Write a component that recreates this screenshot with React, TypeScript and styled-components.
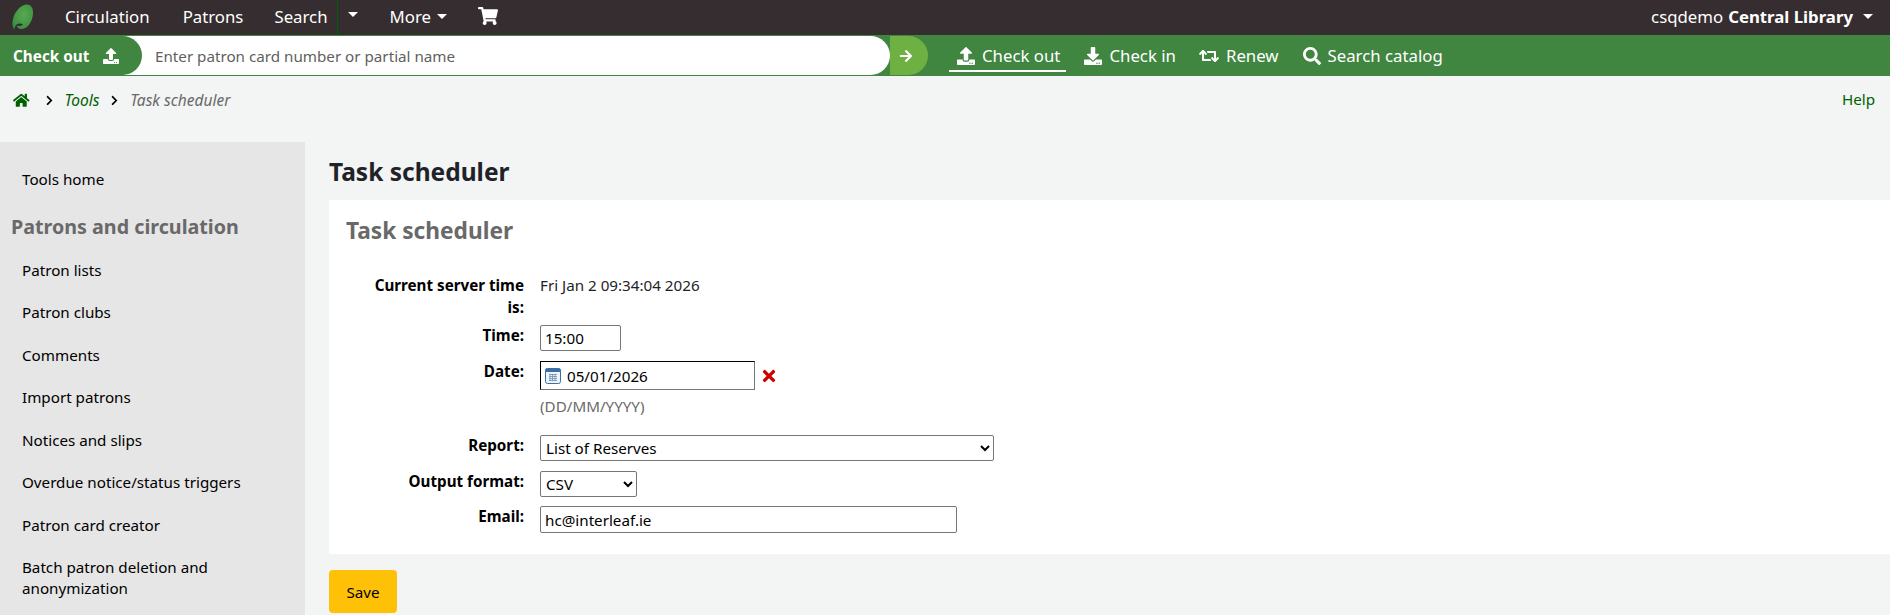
import React from "react";
import styled, { createGlobalStyle } from "styled-components";
import { FaUpload, FaDownload, FaRetweet, FaSearch, FaHome, FaShoppingCart, FaTimes, FaArrowRight, FaChevronRight } from "react-icons/fa";

const Global = createGlobalStyle`
  html, body { margin: 0; padding: 0; height: 615px; overflow: hidden; background: #f3f4f4; }
  body { font-family: "Noto Sans", "Open Sans", sans-serif; font-size: 15.2px; color: #1f2328; }
  * { box-sizing: border-box; }
`;
const Page = styled.div`
  width: 1890px; height: 615px; display: flex; flex-direction: column; overflow: hidden;
`;
const TopBar = styled.nav`
  height: 35px; flex: none; background: #352d2f; color: #fff; display: flex; align-items: center; font-size: 16.8px; padding: 0 0 3px 12px;
`;
const Logo = styled.svg`
  width: 22px; height: 26px; flex: none; margin-right: 31px; margin-top: 1px;
`;
const NavItem = styled.span<{ $gap: number }>`
  margin-right: ${p => p.$gap}px; display: flex; align-items: center; white-space: nowrap;
`;
const Caret = styled.i<{ $left?: number }>`
  display: inline-block; width: 0; height: 0; margin-left: ${p => p.$left ?? 0}px;
  border-left: 5px solid transparent; border-right: 5px solid transparent; border-top: 5px solid #fff;
`;
const SplitCaret = styled.span`
  width: 53px; height: 35px; margin-bottom: -3px; border-left: 1px solid #006100; padding: 0 0 6px 10px; display: flex; align-items: center; flex: none;
`;
const TopRight = styled.div`
  margin-left: auto; margin-right: 17px; display: flex; align-items: center; white-space: nowrap;
  b { font-weight: 700; margin-left: 5px; }
`;
const SearchBar = styled.div`
  height: 41px; flex: none; background: #408540; display: flex; align-items: center; color: #fff; padding: 1px 0;
`;
const SearchField = styled.div`
  width: 890px; height: 39px; flex: none; background: #fff; border-radius: 0 20px 20px 0; display: flex; align-items: center;
`;
const Pill = styled.div`
  width: 142px; height: 39px; flex: none; background: #408540; border-radius: 0 20px 20px 0; padding-left: 13px; display: flex; align-items: center;
  font-weight: 700; font-size: 15.3px; color: #fff; gap: 14px; white-space: nowrap;
`;
const Placeholder = styled.span`
  margin-left: 13px; color: #5f5f5f; font-size: 15.2px;
`;
const Go = styled.div`
  width: 38px; height: 39px; flex: none; background: #6fb043; border-radius: 0 20px 20px 0; display: flex; align-items: center; justify-content: center; font-size: 14px; padding-right: 6px;
`;
const QuickLink = styled.a<{ $on?: boolean; $ml: number; $w?: number }>`
  display: flex; align-items: center; gap: 7px; font-size: 16.8px; color: #fff; white-space: nowrap; height: 30px; margin-top: 2px;
  margin-left: ${p => p.$ml}px; padding: 0 ${p => (p.$on ? 6 : 0)}px 0 ${p => (p.$on ? 8 : 0)}px;
  border-bottom: 2px solid ${p => (p.$on ? "#fff" : "transparent")};
  svg { font-size: ${p => p.$w ?? 18}px; }
`;
const Crumbs = styled.div`
  height: 66px; flex: none; display: flex; align-items: flex-start; padding: 14px 15px 0 13px; font-size: 15.5px; line-height: 21px; font-style: italic; color: #696969;
`;
const CrumbHome = styled.span`
  color: #006100; font-size: 16.5px; display: flex; height: 21px; align-items: center; margin-right: 4px;
`;
const Sep = styled.span`
  color: #000; font-size: 11px; display: flex; height: 21px; align-items: center; margin: 0 10px 0 10px;
`;
const CrumbLink = styled.a`
  color: #006100;
`;
const Help = styled.a`
  margin: -1px 0 0 auto; color: #006100; font-style: normal; font-size: 15.2px;
`;
const Body = styled.div`
  flex: 1; display: flex; min-height: 0;
`;
const Side = styled.aside`
  width: 305px; flex: none; background: #e6e6e6; padding-top: 27px;
`;
const SideItem = styled.a`
  display: block; padding: 0 22px; margin-bottom: 21.5px; color: #000; font-size: 15.2px; line-height: 21px;
`;
const SideHead = styled.h5`
  margin: 0 0 20px; padding: 2px 0 0 11px; font-size: 19.7px; line-height: 26px; font-weight: 700; color: #696969;
`;
const Main = styled.main`
  flex: 1; padding: 0 0 0 24px; min-width: 0;
`;
const H1 = styled.h1`
  margin: 0; padding-top: 14px; height: 58px; font-size: 24.5px; line-height: 32px; font-weight: 700; color: #1f2328;
`;
const Panel = styled.section`
  background: #fff; height: 354px; padding: 16px 17px 0;
`;
const H2 = styled.h2`
  margin: 0 0 29px; font-size: 22.7px; line-height: 30px; font-weight: 700; color: #696969;
`;
const Row = styled.div<{ $h: number }>`
  display: flex; height: ${p => p.$h}px;
`;
const Label = styled.label`
  width: 178px; flex: none; margin-top: -1px; text-align: right; font-weight: 700; color: #000; line-height: 22px; padding-left: 26px; font-size: 15.2px;
`;
const Value = styled.div`
  margin: -1px 0 0 16px; line-height: 22px; color: #1f2328;
`;
const Control = styled.div`
  margin-left: 16px; display: flex; align-items: flex-start;
`;
const TextInput = styled.input<{ $w: number; $h: number }>`
  width: ${p => p.$w}px; height: ${p => p.$h}px; border: 1px solid #767676; border-radius: 2px; padding: 1px 4px; font: 15.2px "Noto Sans", sans-serif; color: #000; background: #fff;
`;
const DateBox = styled.div`
  width: 215px; height: 29px; border: 1px solid; border-color: #000 #767676 #767676 #000; background: #fff; display: flex; align-items: center; padding-left: 4px; gap: 6px; font-size: 15.2px; color: #000;
`;
const Clear = styled.span`
  color: #cc0000; font-size: 18px; margin-left: 5px; display: flex; height: 29px; align-items: center;
`;
const Hint = styled.div`
  margin: 6px 0 0 194px; color: #696969; font-size: 15.2px; line-height: 20px; height: 39px;
`;
const Select = styled.select<{ $w: number }>`
  width: ${p => p.$w}px; height: 26px; border: 1px solid #767676; border-radius: 2px; background: #fff; color: #000; padding: 0 0 0 1px; font: 15.2px "Noto Sans", sans-serif;
`;
const Save = styled.button`
  width: 68px; height: 43px; margin-top: 16px; border: 0; border-radius: 4px; background: #ffc107; color: #000; font: 15.2px "Noto Sans", sans-serif; padding: 0;
`;

const side = ["Patron lists", "Patron clubs", "Comments", "Import patrons", "Notices and slips", "Overdue notice/status triggers", "Patron card creator", "Batch patron deletion and anonymization"];

export default function App() {
  return (
    <Page>
      <Global />
      <TopBar>
        <Logo viewBox="0 0 22 26">
          <defs>
            <radialGradient id="leaf" cx="0.55" cy="0.4" r="0.65">
              <stop offset="0" stopColor="#5aa84f" />
              <stop offset="1" stopColor="#38903f" />
            </radialGradient>
          </defs>
          <path d="M15 .5C19.500 .5 21.500 5 21 10C20.500 17 16 24.500 10 25C7 25.200 5 23.500 4.500 21.500C7 22.500 9.500 22 11 20.500C9 19 6 19 4 21C3 22.500 2.500 24 2 25.500C.5 23 0 19 1 15C3 7 9 .5 15 .5Z" fill="url(#leaf)" />
        </Logo>
        <NavItem $gap={33}>Circulation</NavItem>
        <NavItem $gap={31}>Patrons</NavItem>
        <NavItem $gap={9}>Search</NavItem>
        <SplitCaret><Caret /></SplitCaret>
        <NavItem $gap={31}>More<Caret $left={6} /></NavItem>
        <NavItem $gap={0}><FaShoppingCart size={20} /></NavItem>
        <TopRight>csqdemo <b>Central Library</b><Caret $left={10} /></TopRight>
      </TopBar>
      <SearchBar>
        <SearchField>
          <Pill>Check out <FaUpload size={16} /></Pill>
          <Placeholder>Enter patron card number or partial name</Placeholder>
        </SearchField>
        <Go><FaArrowRight /></Go>
        <QuickLink $on $ml={21}><FaUpload />Check out</QuickLink>
        <QuickLink $ml={18}><FaDownload />Check in</QuickLink>
        <QuickLink $ml={23} $w={20}><FaRetweet />Renew</QuickLink>
        <QuickLink $ml={24}><FaSearch />Search catalog</QuickLink>
      </SearchBar>
      <Crumbs>
        <CrumbHome><FaHome /></CrumbHome>
        <Sep><FaChevronRight /></Sep>
        <CrumbLink>Tools</CrumbLink>
        <Sep><FaChevronRight /></Sep>
        <span>Task scheduler</span>
        <Help>Help</Help>
      </Crumbs>
      <Body>
        <Side>
          <SideItem>Tools home</SideItem>
          <SideHead>Patrons and circulation</SideHead>
          {side.map(s => <SideItem key={s}>{s}</SideItem>)}
        </Side>
        <Main>
          <H1>Task scheduler</H1>
          <form onSubmit={e => e.preventDefault()}>
            <Panel>
              <H2>Task scheduler</H2>
              <Row $h={50}><Label>Current server time is:</Label><Value>Fri Jan 2 09:34:04 2026</Value></Row>
              <Row $h={36}><Label>Time:</Label><Control><TextInput $w={81} $h={26} defaultValue="15:00" /></Control></Row>
              <Row $h={29}>
                <Label>Date:</Label>
                <Control>
                  <DateBox>
                    <svg width="16" height="16" viewBox="0 0 16 16">
                      <rect x="0.5" y="0.5" width="15" height="15" rx="2" fill="#eef3f9" stroke="#3b6ea5" />
                      <rect x="0.5" y="0.5" width="15" height="3.5" rx="1" fill="#3b6ea5" />
                      <path d="M4 6.5h8M4 8.5h8M4 10.5h8M4 12.5h8M5 6v7M7.500 6v7M10 6v7" stroke="#6c8fb2" strokeWidth="0.8" />
                    </svg>
                    05/01/2026
                  </DateBox>
                  <Clear><FaTimes /></Clear>
                </Control>
              </Row>
              <Hint>(DD/MM/YYYY)</Hint>
              <Row $h={36}><Label>Report:</Label><Control><Select $w={454} defaultValue="List of Reserves"><option>List of Reserves</option></Select></Control></Row>
              <Row $h={35}><Label>Output format:</Label><Control><Select $w={97} defaultValue="CSV"><option>CSV</option></Select></Control></Row>
              <Row $h={30}><Label>Email:</Label><Control><TextInput $w={417} $h={27} defaultValue="hc@interleaf.ie" /></Control></Row>
            </Panel>
            <Save type="submit">Save</Save>
          </form>
        </Main>
      </Body>
    </Page>
  );
}
